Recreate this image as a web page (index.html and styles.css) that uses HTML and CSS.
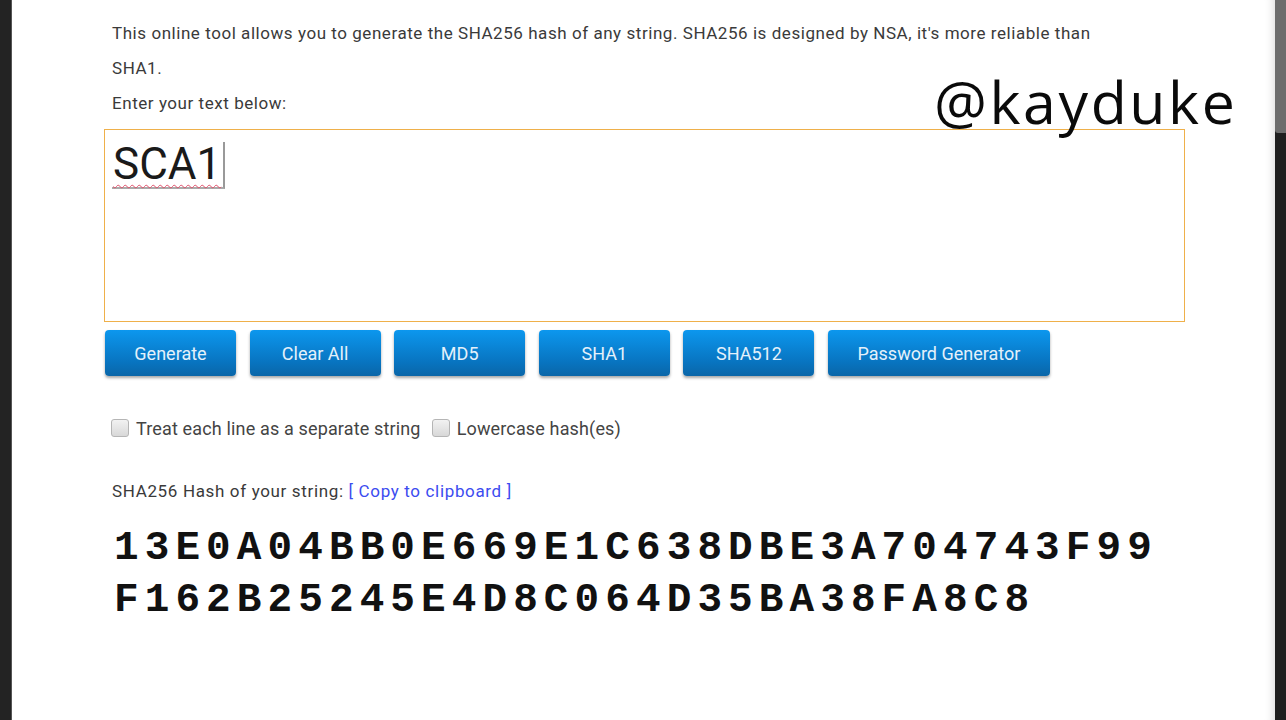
FILE: index.html
```html
<!DOCTYPE html>
<html>
<head>
<meta charset="utf-8">
<link rel="stylesheet" href="styles.css">
</head>
<body>
<div class="screen">
  <div class="bezel-left"></div>
  <div class="page">
    <div class="watermark">@kayduke</div>
    <div class="intro">
      This online tool allows you to generate the SHA256 hash of any string. SHA256 is designed by NSA, it's more reliable than<br>SHA1.<br>Enter your text below:
    </div>
    <div class="input-box">
      <span class="typed">SCA1</span>
    </div>
    <div class="buttons">
      <span class="btn">Generate</span>
      <span class="btn">Clear All</span>
      <span class="btn">MD5</span>
      <span class="btn">SHA1</span>
      <span class="btn">SHA512</span>
      <span class="btn btn-wide">Password Generator</span>
    </div>
    <div class="options">
      <span class="check"></span><span class="opt-label">Treat each line as a separate string</span>
      <span class="check"></span><span class="opt-label">Lowercase hash(es)</span>
    </div>
    <div class="result-label">SHA256 Hash of your string: <span class="link">[ Copy to clipboard ]</span></div>
    <div class="hash">13E0A04BB0E669E1C638DBE3A704743F99<br>F162B25245E4D8C064D35BA38FA8C8</div>
  </div>
  <div class="bezel-right">
    <div class="bezel-top"></div>
  </div>
</div>
</body>
</html>
```
FILE: styles.css
```css
html, body {
  margin: 0;
  padding: 0;
  width: 1286px;
  height: 720px;
  overflow: hidden;
  background: #222;
}
.screen {
  display: flex;
  height: 720px;
}
.bezel-left {
  width: 12px;
  background: #232323;
  box-shadow: inset -1px 0 0 #555;
}
.page {
  position: relative;
  flex: 1;
  background: #fff;
  padding: 16px 0 0 92px;
  box-shadow: inset -10px 0 8px -8px #ddd;
  font-family: Roboto, "Liberation Sans", sans-serif;
  color: #3a3a3a;
}
.bezel-right {
  width: 11px;
  background: #1f1f1f;
}
.bezel-top {
  height: 133px;
  background: #6d6d6d;
  border-bottom-left-radius: 3px;
}
.watermark {
  position: absolute;
  left: 922px;
  top: 66px;
  font-family: "Open Sans", "Noto Sans", sans-serif;
  font-size: 59px;
  line-height: 70px;
  color: #0a0a0a;
  letter-spacing: 2.6px;
}
.intro {
  padding-left: 8px;
  font-size: 17px;
  letter-spacing: 0.55px;
  line-height: 35px;
}
.input-box {
  margin-top: 8px;
  width: 1081px;
  border: 1px solid #efb04a;
  padding: 12px 0 0 7px;
  box-sizing: border-box;
  height: 193px;
}
.typed {
  display: inline-block;
  font-size: 44px;
  line-height: 44px;
  color: #1a1a1a;
  padding: 0 2px 1px 1px;
  border-right: 2px solid #999;
  border-bottom: 2px solid #aaa;
  text-decoration: underline wavy #e0506a;
  text-decoration-thickness: 1px;
  text-underline-offset: 5px;
}
.buttons {
  display: flex;
  gap: 13.6px;
  margin-top: 8px;
  padding-left: 1px;
}
.btn {
  width: 131px;
  height: 46px;
  box-sizing: border-box;
  display: flex;
  align-items: center;
  justify-content: center;
  border-radius: 4px;
  background: linear-gradient(#0c97ee, #0874c0 70%, #0a66a8);
  color: #e4f1fb;
  font-size: 18px;
  box-shadow: 0 2px 3px rgba(0,0,0,0.35);
}
.btn-wide {
  width: 222px;
}
.options {
  display: flex;
  align-items: center;
  margin-top: 42px;
  padding-left: 7px;
  font-size: 18px;
  letter-spacing: 0.15px;
  color: #444;
  height: 20px;
}
.check {
  width: 16px;
  height: 16px;
  border: 1px solid #b5b5b5;
  border-radius: 3px;
  background: linear-gradient(#f2f2f2, #d8d8d8);
  margin-right: 7px;
}
.opt-label {
  margin-right: 11px;
}
.result-label {
  margin-top: 43px;
  padding-left: 8px;
  font-size: 17px;
  letter-spacing: 0.65px;
  line-height: 20px;
  color: #3a3a3a;
}
.link {
  color: #3c4cf0;
}
.hash {
  margin-top: 21px;
  padding-left: 10px;
  font-family: "Liberation Mono", monospace;
  font-weight: bold;
  font-size: 41px;
  letter-spacing: 6.1px;
  line-height: 52px;
  color: #111;
}
```
